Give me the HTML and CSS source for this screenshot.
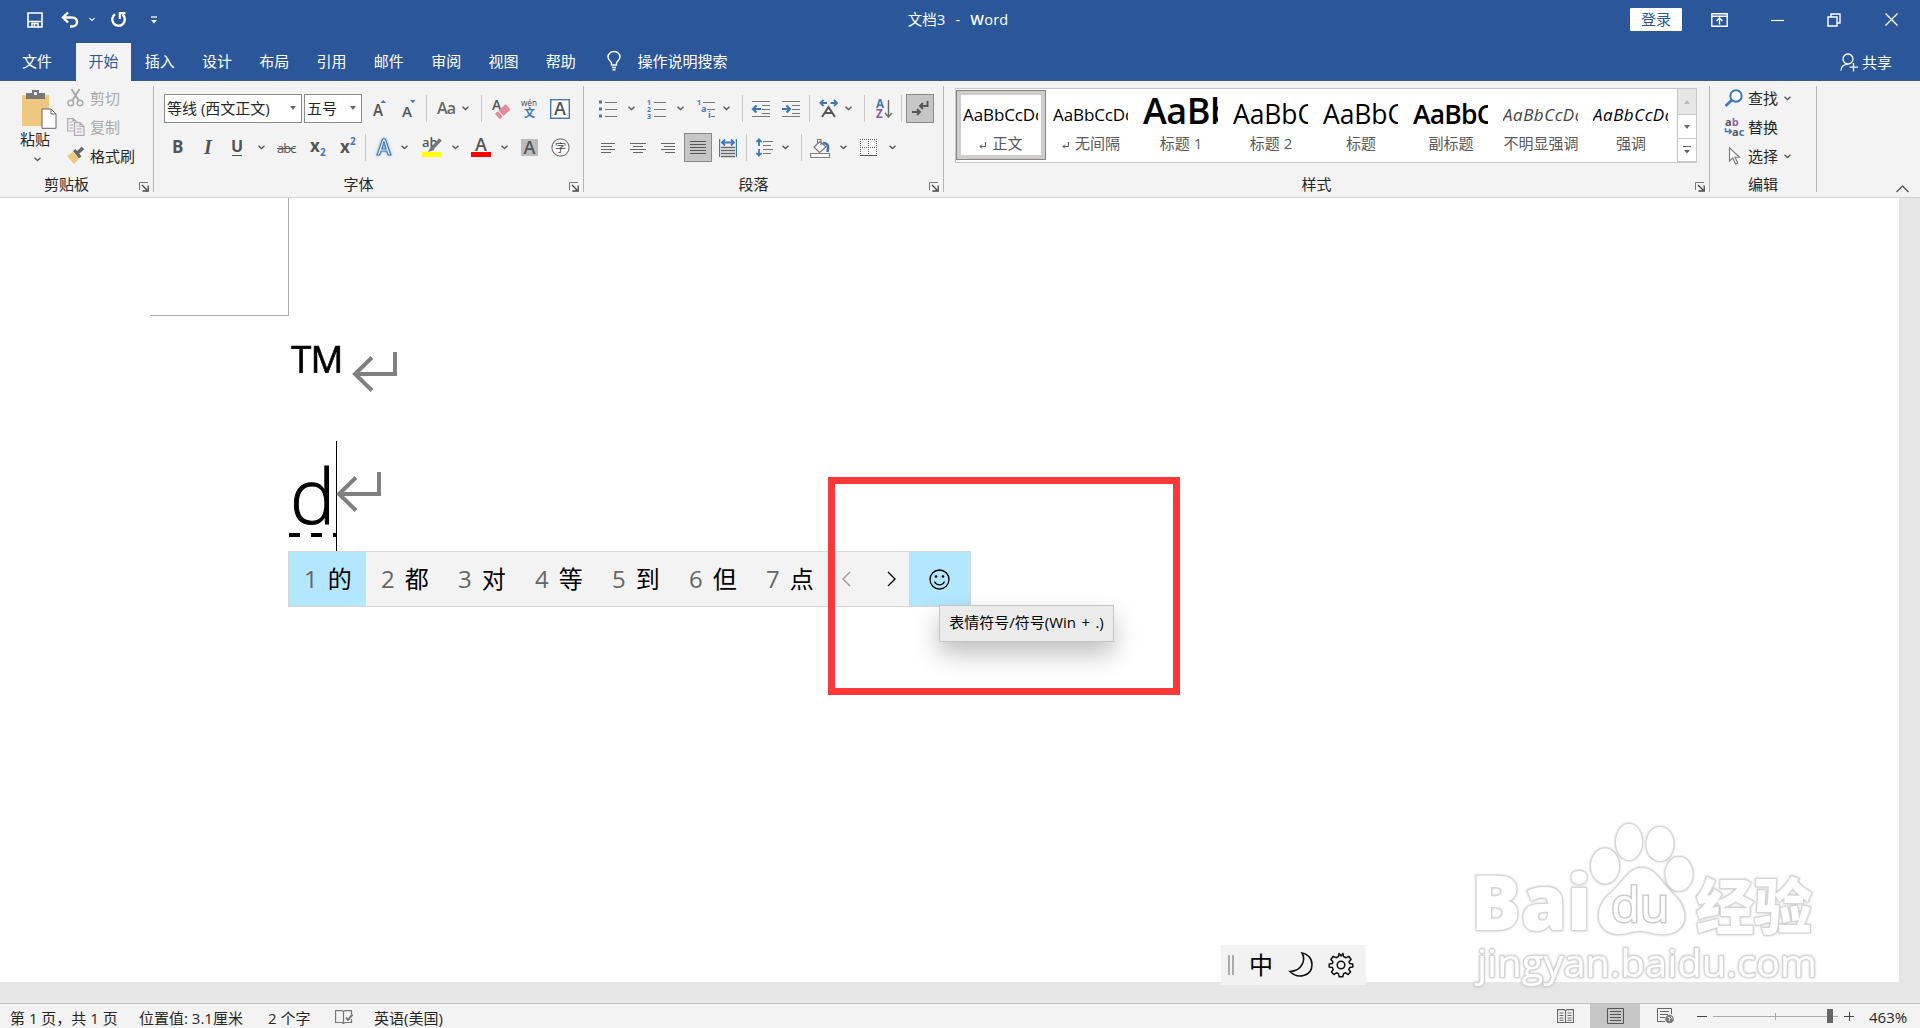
FILE: index.html
```html
<!DOCTYPE html>
<html lang="zh-CN">
	<head>
		<meta charset="UTF-8">
		<title>文档3 - Word</title>
		<link rel="stylesheet" href="styles.css">
	</head>
	<body>
		<svg class="defs">
			<symbol id="caret" viewBox="0 0 7 5"><path d="M.5 .8L3.5 3.6L6.5 .8" fill="none" stroke="currentColor" stroke-width="1.3"/></symbol>
			<symbol id="launcher" viewBox="0 0 10 10"><path d="M.5 8V.5H9" fill="none" stroke="#777"/><path d="M3 3L8 8M9.2 3.5V9H3.5" fill="none" stroke="#444" stroke-width="1.3"/></symbol>
			<symbol id="enter" viewBox="0 0 45 40"><path d="M43 0V22H3M20 5.5L3 22L20 38.5" fill="none" stroke="#808080" stroke-width="4"/></symbol>
		</svg>

		<div class="header">
			<div class="titlebar">
				<div class="quick">
					<svg width="16" height="16" viewBox="0 0 16 16"><path d="M1 1H15V15H1Z" fill="none" stroke="#fff" stroke-width="1.6"/><path d="M1 9.5H15M5 15V11.5H11V15M7.5 12V15" fill="none" stroke="#fff" stroke-width="1.5"/></svg>
					<svg width="18" height="16" viewBox="0 0 18 16"><path d="M2 5.5H11C18 5.5 17.5 14.5 11 14.5H9" fill="none" stroke="#fff" stroke-width="2.4"/><path d="M7 .5L2 5.5L7 10.5" fill="none" stroke="#fff" stroke-width="2.4"/></svg>
					<svg class="white" width="6" height="5"><use href="#caret"/></svg>
					<svg width="17" height="17" viewBox="0 0 17 17"><path d="M5 3.2A6.3 6.3 0 1 0 12.5 3.5" fill="none" stroke="#fff" stroke-width="2.4"/><path d="M9.8 8V2.2H15.5" fill="none" stroke="#fff" stroke-width="2.2"/></svg>
					<svg width="6" height="8" viewBox="0 0 6 8"><path d="M0 1H6" stroke="#fff" stroke-width="1.3"/><path d="M0 4H6L3 7.5Z" fill="#fff"/></svg>
				</div>
				<div class="title">文档3&nbsp; -&nbsp; <b>W</b>ord</div>
				<div class="window">
					<span class="login">登录</span>
					<svg width="17" height="14" viewBox="0 0 17 14"><path d="M.8 .8H16.2V13.2H.8ZM.8 3.2H16.2M8.5 11.5V5.5M5.5 8L8.5 5L11.5 8" fill="none" stroke="#fff" stroke-width="1.4"/></svg>
					<svg width="13" height="14" viewBox="0 0 13 14"><path d="M0 7.5H13" stroke="#fff" stroke-width="1.2"/></svg>
					<svg width="14" height="14" viewBox="0 0 14 14"><path d="M1 4H10V13H1ZM4 4V1H13V10H10" fill="none" stroke="#fff" stroke-width="1.4"/></svg>
					<svg width="13" height="13" viewBox="0 0 13 13"><path d="M.5 .5L12.5 12.5M12.5 .5L.5 12.5" stroke="#fff" stroke-width="1.4"/></svg>
				</div>
			</div>
			<ul class="tabs">
				<li class="file">文件</li>
				<li class="ac">开始</li>
				<li>插入</li>
				<li>设计</li>
				<li>布局</li>
				<li>引用</li>
				<li>邮件</li>
				<li>审阅</li>
				<li>视图</li>
				<li>帮助</li>
				<li class="tell">
					<svg width="14" height="20" viewBox="0 0 14 20"><path d="M4.5 14V12C4.5 10.5 1 9.5 1 6A6 5.500 0 0 1 13 6C13 9.5 9.5 10.5 9.5 12V14ZM5 16.5H9M5.500 18.8H8.500" fill="none" stroke="#fff" stroke-width="1.4"/></svg>
					操作说明搜索
				</li>
				<li class="share">
					<svg width="18" height="18" viewBox="0 0 18 18"><circle cx="8" cy="6" r="5" fill="none" stroke="#fff" stroke-width="1.3"/><path d="M1 17.5C1 13 4 11.3 8 11.3M13.5 10V18.5M9.5 14.2H18" fill="none" stroke="#fff" stroke-width="1.3"/></svg>
					共享
				</li>
			</ul>
		</div>

		<div class="ribbon">
			<div class="group clipboard">
				<div class="tools">
					<div class="paste">
						<svg width="35" height="39" viewBox="0 0 35 39"><path d="M0 5H27V36H0Z" fill="#edc87e"/><path d="M4 3H10V0H17V3H23V9H4Z" fill="#777"/><rect x="12" y="2" width="3" height="3" fill="#f3f3f3"/><path d="M20 19H29L34 24V38.3H20Z" fill="#fff" stroke="#666"/><path d="M29 19V24H34" fill="none" stroke="#666"/></svg>
						<span>粘贴</span>
						<svg width="7" height="5"><use href="#caret"/></svg>
					</div>
					<ul class="clips">
						<li class="off"><svg width="18" height="18" viewBox="0 0 18 18"><path d="M4.5 0L12 12M12.5 0L5 12" stroke="#aaa" stroke-width="2"/><circle cx="3.8" cy="14" r="2.8" fill="none" stroke="#aaa" stroke-width="1.5"/><circle cx="13" cy="14" r="2.8" fill="none" stroke="#aaa" stroke-width="1.5"/></svg>剪切</li>
						<li class="off"><svg width="18" height="18" viewBox="0 0 18 18"><path d="M7 13H.7V.7H6L10 4M6 .7V4M2.5 4H5M2.5 7H6M2.5 10H6" fill="none" stroke="#b0a8b0" stroke-width="1.2"/><path d="M7.5 4.7H13L17 8.5V17.3H7.5ZM13 4.7V8.5H17M9.5 8H11.5M9.5 11H15M9.5 14H15" fill="none" stroke="#b0a8b0" stroke-width="1.2"/></svg>复制</li>
						<li><svg width="18" height="18" viewBox="0 0 18 18"><path d="M0 9L6 5L12 12L7 17Z" fill="#edc87e"/><path d="M6 4L8.5 2L14.5 9.5L12 11.5Z" fill="#666"/><path d="M11 5.5L16 1" stroke="#666" stroke-width="3.5"/></svg>格式刷</li>
					</ul>
				</div>
				<div class="label">剪贴板</div>
				<svg class="launcher"><use href="#launcher"/></svg>
			</div>

			<div class="group font">
				<div class="tools">
					<div class="row row1">
						<div class="combo name">等线 (西文正文)</div>
						<div class="combo size">五号</div>
						<svg width="14" height="20" viewBox="0 0 14 20"><text x="0" y="17" font-size="17" textLength="10" lengthAdjust="spacingAndGlyphs" class="semi">A</text><path d="M7.5 4L10.3 1L13 4Z" fill="#3f78b5"/></svg>
						<svg width="14" height="20" viewBox="0 0 14 20"><text x="0" y="18" font-size="15" textLength="10" lengthAdjust="spacingAndGlyphs" class="semi">A</text><path d="M8 1L10.8 4L13.5 1Z" fill="#3f78b5"/></svg>
						<i class="sep"></i>
						<span class="aa">Aa</span>
						<svg width="7" height="5"><use href="#caret"/></svg>
						<i class="sep"></i>
						<svg width="18" height="20" viewBox="0 0 18 20"><text x="0" y="11" font-size="14" class="semi">A</text><g transform="rotate(-42 10 13)"><rect x="3.5" y="9.5" width="4" height="7.5" rx="1" fill="#e58a9d"/><rect x="8.5" y="9.5" width="9.5" height="7.5" rx="1" fill="#e58a9d"/></g></svg>
						<svg width="17" height="20" viewBox="0 0 17 20"><text x="0" y="7" font-size="9.5" textLength="16" lengthAdjust="spacingAndGlyphs">wén</text><text x="3" y="18" font-size="11" fill="#3f78b5" font-weight="bold">文</text></svg>
						<svg width="20" height="20" viewBox="0 0 20 20"><rect x=".7" y=".7" width="18.6" height="18.6" fill="#fff" stroke="#3f78b5" stroke-width="1.4"/><text x="10" y="16.3" font-size="18" text-anchor="middle" class="semi">A</text></svg>
					</div>
					<div class="row row2">
						<b class="glyph bold">B</b>
						<b class="glyph italic">I</b>
						<b class="glyph under">U</b>
						<svg width="7" height="5"><use href="#caret"/></svg>
						<span class="glyph strike">abc</span>
						<svg width="16" height="20" viewBox="0 0 16 20"><text x="0" y="14" font-size="17" font-weight="bold" class="grey">x</text><text x="10" y="18" font-size="10" fill="#3f78b5" font-weight="bold">2</text></svg>
						<svg width="16" height="20" viewBox="0 0 16 20"><text x="0" y="15" font-size="17" font-weight="bold" class="grey">x</text><text x="10" y="7" font-size="10" fill="#3f78b5" font-weight="bold">2</text></svg>
						<i class="sep"></i>
						<svg width="17" height="21" viewBox="0 0 17 21"><text x="8" y="18" font-size="21" text-anchor="middle" class="effect">A</text></svg>
						<svg width="7" height="5"><use href="#caret"/></svg>
						<svg width="21" height="21" viewBox="0 0 21 21"><text x="0" y="10" font-size="13" class="semi">ab</text><path d="M18.5 2.5L10 11.5" stroke="#777" stroke-width="3.5"/><path d="M9 9.5L12.5 13L6 15Z" fill="#777"/><rect y="15" width="20" height="5" fill="#ff0"/></svg>
						<svg width="7" height="5"><use href="#caret"/></svg>
						<svg width="21" height="21" viewBox="0 0 21 21"><text x="10" y="13.5" font-size="18" text-anchor="middle" class="semi">A</text><rect y="15" width="20" height="5" fill="#f00"/></svg>
						<svg width="7" height="5"><use href="#caret"/></svg>
						<svg width="17" height="19" viewBox="0 0 17 19"><rect width="17" height="17" y="1" fill="#bcbcbc"/><text x="8.5" y="16" font-size="18" text-anchor="middle" class="semi">A</text></svg>
						<svg width="19" height="19" viewBox="0 0 19 19"><circle cx="9.5" cy="9.5" r="8.6" fill="#fff" stroke="#777" stroke-width="1.2"/><text x="9.5" y="13.5" font-size="11.5" text-anchor="middle">字</text></svg>
					</div>
				</div>
				<div class="label">字体</div>
				<svg class="launcher"><use href="#launcher"/></svg>
			</div>

			<div class="group para">
				<div class="tools">
					<div class="row row1">
						<svg width="19" height="18" viewBox="0 0 19 18"><path d="M6 2.5H18M6 9.5H18M6 16.5H18" stroke="#777"/><path d="M0 2H3M0 9H3M0 16H3" stroke="#3f78b5" stroke-width="3"/></svg>
						<svg width="7" height="5"><use href="#caret"/></svg>
						<svg width="19" height="20" viewBox="0 0 19 20"><path d="M7 3.5H19M7 10.5H19M7 17.5H19" stroke="#777"/><g fill="#3f78b5" font-size="7" font-weight="bold"><text y="6">1</text><text y="13">2</text><text y="20">3</text></g></svg>
						<svg width="7" height="5"><use href="#caret"/></svg>
						<svg width="19" height="20" viewBox="0 0 19 20"><path d="M6 3.5H18M10 10.5H18M14 17.5H18" stroke="#777"/><g fill="#3f78b5" font-weight="bold"><text y="6" font-size="7">1</text><text x="4" y="13" font-size="9">a</text><text x="11" y="19" font-size="9">i</text></g></svg>
						<svg width="7" height="5"><use href="#caret"/></svg>
						<i class="sep"></i>
						<svg width="18" height="18" viewBox="0 0 18 18"><path d="M0 1.5H18M10 5.5H18M10 9.5H18M10 13.5H18M0 16.5H18" stroke="#777"/><path d="M9 9H1M4.5 5.5L1 9L4.5 12.5" fill="none" stroke="#3f78b5" stroke-width="2.2"/></svg>
						<svg width="18" height="18" viewBox="0 0 18 18"><path d="M0 1.5H18M10 5.5H18M10 9.5H18M10 13.5H18M0 16.5H18" stroke="#777"/><path d="M0 9H8M4.5 5.5L8 9L4.5 12.5" fill="none" stroke="#3f78b5" stroke-width="2.2"/></svg>
						<i class="sep"></i>
						<svg width="20" height="19" viewBox="0 0 20 19"><path d="M3 18L9.5 8L16 18M6 14H13.5" fill="none" stroke="#555" stroke-width="2"/><path d="M8 4H1.5M4.5 1L1.5 4L4.5 7M11.5 4H18M15 1L18 4L15 7" fill="none" stroke="#3f78b5" stroke-width="1.8"/></svg>
						<svg width="7" height="5"><use href="#caret"/></svg>
						<i class="sep"></i>
						<svg width="18" height="20" viewBox="0 0 18 20"><text x="1" y="9" font-size="11.5" font-weight="bold" fill="#3f78b5">A</text><text x="1" y="19" font-size="11.5" font-weight="bold" fill="#8c5aa8">Z</text><path d="M13.5 1V18M10 14L13.5 18L17 14" fill="none" stroke="#666" stroke-width="1.4"/></svg>
						<i class="sep"></i>
						<div class="pressed"><svg width="17" height="15" viewBox="0 0 17 15"><path d="M15.5 0V5H8.5M11 2L8 5L11 8" fill="none" stroke="#555" stroke-width="1.9"/><path d="M0 11H7M5 8L8 11L5 14" fill="none" stroke="#555" stroke-width="1.9"/></svg></div>
					</div>
					<div class="row row2">
						<svg width="14" height="12" viewBox="0 0 14 12"><path d="M0 1.5H14M0 4.5H11M0 7.5H14M0 10.5H10" stroke="#666"/></svg>
						<svg width="16" height="12" viewBox="0 0 16 12"><path d="M0 1.5H16M3 4.5H13M0 7.5H16M3 10.5H13" stroke="#666"/></svg>
						<svg width="14" height="12" viewBox="0 0 14 12"><path d="M0 1.5H14M3 4.5H14M0 7.5H14M4 10.5H14" stroke="#666"/></svg>
						<div class="pressed"><svg width="16" height="14" viewBox="0 0 16 14"><path d="M0 .5H16M0 3.5H16M0 6.5H16M0 9.5H16M0 12.5H16" stroke="#555"/></svg></div>
						<svg width="18" height="18" viewBox="0 0 18 18"><path d="M.6 0V18M17.4 0V18" stroke="#3f78b5" stroke-width="1.2"/><path d="M2 8.5H16M2 11.5H16M2 14.5H16M2 17.5H16" stroke="#666" stroke-width="1.4"/><path d="M3 3.5H15M6 .5L3 3.5L6 6.5M12 .5L15 3.5L12 6.5" fill="none" stroke="#3f78b5" stroke-width="1.8"/></svg>
						<i class="sep"></i>
						<svg width="17" height="19" viewBox="0 0 17 19"><path d="M7 3.5H17M7 7.5H15M7 11.5H17M7 15.5H15" stroke="#777"/><path d="M3 1.5V8M3 11V17.5M.5 4L3 1.3L5.5 4M.5 15L3 17.7L5.5 15" fill="none" stroke="#3f78b5" stroke-width="1.8"/></svg>
						<svg width="7" height="5"><use href="#caret"/></svg>
						<i class="sep"></i>
						<svg width="21" height="20" viewBox="0 0 21 20"><path d="M4 9L10 3.5L16 9L9.5 14.5ZM7.5 6V1.5H11V7" fill="#fff" stroke="#777" stroke-width="1.2"/><path d="M13 5C18 5 19 8 17.5 14" fill="none" stroke="#3f78b5" stroke-width="2.5"/><rect x=".6" y="15.6" width="19" height="3.8" fill="#fff" stroke="#777"/></svg>
						<svg width="7" height="5"><use href="#caret"/></svg>
						<svg width="18" height="18" viewBox="0 0 18 18"><path d="M0 0H17V17H0Z" fill="#fff"/><path d="M0 .5H17M.5 0V17M16.5 0V17M8.5 0V17M0 8.5H17" stroke="#666" stroke-dasharray="1 1"/><path d="M0 16.5H17" stroke="#555"/></svg>
						<svg width="7" height="5"><use href="#caret"/></svg>
					</div>
				</div>
				<div class="label">段落</div>
				<svg class="launcher"><use href="#launcher"/></svg>
			</div>

			<div class="group styles">
				<div class="tools">
					<ul class="gallery">
						<li class="ac"><p>AaBbCcDc</p><span><svg width="7" height="7" viewBox="0 0 7 7"><path d="M6.500 0V4.500H1M3 2.500L1 4.500L3 6.500" fill="none" stroke="#555"/></svg>正文</span></li>
						<li><p>AaBbCcDc</p><span><svg width="7" height="7" viewBox="0 0 7 7"><path d="M6.500 0V4.500H1M3 2.500L1 4.500L3 6.500" fill="none" stroke="#555"/></svg>无间隔</span></li>
						<li class="h1"><p>AaBb</p><span>标题 1</span></li>
						<li class="h2"><p>AaBbC</p><span>标题 2</span></li>
						<li class="h2"><p>AaBbC</p><span>标题</span></li>
						<li class="h2 strong"><p>AaBbC</p><span>副标题</span></li>
						<li class="em light"><p>AaBbCcDc</p><span>不明显强调</span></li>
						<li class="em"><p>AaBbCcDc</p><span>强调</span></li>
					</ul>
					<div class="scroll">
						<div class="dim"><svg width="6" height="4"><path d="M0 4L3 0L6 4Z" fill="#bbb"/></svg></div>
						<div><svg width="6" height="4"><path d="M0 0L3 4L6 0Z" fill="#666"/></svg></div>
						<div><svg width="8" height="8"><path d="M0 .5H8" stroke="#666"/><path d="M1 4H7L4 7.5Z" fill="#666"/></svg></div>
					</div>
				</div>
				<div class="label">样式</div>
				<svg class="launcher"><use href="#launcher"/></svg>
			</div>

			<div class="group edit">
				<ul class="tools">
					<li><svg width="20" height="18" viewBox="0 0 20 18"><circle cx="12" cy="7" r="5.7" fill="#fff" stroke="#3f78b5" stroke-width="2"/><path d="M8 11L1.5 17" stroke="#3f78b5" stroke-width="2.6"/></svg>查找<svg class="far" width="7" height="5"><use href="#caret"/></svg></li>
					<li><svg width="20" height="19" viewBox="0 0 20 19"><g font-size="11" font-weight="bold"><text x="1" y="8" class="grey">a<tspan fill="#9b5fb5">b</tspan></text><text x="8" y="18" class="grey">a<tspan fill="#3f78b5">c</tspan></text></g><path d="M1.5 10V13.5H7M5 11L7.5 13.5L5 16" fill="none" stroke="#3f78b5" stroke-width="1.4"/></svg>替换</li>
					<li><svg width="20" height="18" viewBox="0 0 20 18"><path d="M5.5 .8V14L8.8 11L11.5 17L13.8 16L11 10.3H15.5Z" fill="#fff" stroke="#777" stroke-width="1.1"/></svg>选择<svg width="7" height="5"><use href="#caret"/></svg></li>
				</ul>
				<div class="label">编辑</div>
			</div>
			<svg class="collapse" width="13" height="8" viewBox="0 0 13 8"><path d="M.5 7L6.5 1L12.5 7" fill="none" stroke="#555" stroke-width="1.4"/></svg>
		</div>

		<div class="workspace">
			<div class="page">
				<div class="corner"></div>
				<p class="line tm"><span>™</span><svg width="45" height="40"><use href="#enter"/></svg></p>
				<p class="line typed"><span>d</span><i class="cursor"></i><svg width="45" height="40"><use href="#enter"/></svg></p>
			</div>

			<div class="ime">
				<ol>
					<li class="ac"><i>1</i>的</li>
					<li><i>2</i>都</li>
					<li><i>3</i>对</li>
					<li><i>4</i>等</li>
					<li><i>5</i>到</li>
					<li><i>6</i>但</li>
					<li><i>7</i>点</li>
				</ol>
				<div class="pager">
					<svg width="9" height="16" viewBox="0 0 9 16"><path d="M8 1L1 8L8 15" fill="none" stroke="#999" stroke-width="1.3"/></svg>
					<svg width="9" height="16" viewBox="0 0 9 16"><path d="M1 1L8 8L1 15" fill="none" stroke="#000" stroke-width="1.4"/></svg>
				</div>
				<div class="emoji">
					<svg width="21" height="21" viewBox="0 0 21 21"><circle cx="10.5" cy="10.5" r="9.5" fill="none" stroke="#000" stroke-width="1.3"/><circle cx="7" cy="7.5" r="1.3"/><circle cx="14" cy="7.5" r="1.3"/><path d="M5.5 12.5C7.5 17 13.5 17 15.5 12.5" fill="none" stroke="#000" stroke-width="1.3"/></svg>
				</div>
			</div>
			<div class="mark"></div>
			<div class="tip">表情符号/符号(Win + .)</div>

			<div class="imebar">
				<i class="grip"></i>
				<span>中</span>
				<svg width="24" height="26" viewBox="0 0 24 26"><path d="M13 1C17 8 13 19 1 19.5C8 27 23 25 23 12.5C23 6 18 1.5 13 1Z" fill="none" stroke="#111" stroke-width="1.6"/></svg>
				<svg width="26" height="26" viewBox="0 0 26 26"><circle cx="13" cy="13" r="3.8" fill="none" stroke="#111" stroke-width="1.5"/><path d="M11 1.5L10.5 4.5L8 5.7L5.2 4.3L2.9 7.5L4.9 9.7L4.3 11.5L1.2 12V15L4.3 15.5L5.2 17.5L3.5 20L5.8 22.5L8.5 20.8L10.4 21.6L11.2 24.7H14.8L15.6 21.6L17.5 20.8L20.2 22.5L22.5 20L20.8 17.5L21.7 15.5L24.8 15V12L21.7 11.5L21 9.7L23.1 7.5L20.8 4.3L18 5.7L15.5 4.5L15 1.5L13 4Z" fill="none" stroke="#111" stroke-width="1.5" stroke-linejoin="round"/></svg>
			</div>

			<svg class="watermark" width="360" height="180" viewBox="0 0 360 180">
				<g class="wm">
					<text x="7" y="108" font-size="77" font-weight="800" textLength="120" lengthAdjust="spacingAndGlyphs">Bai</text>
					<ellipse cx="141" cy="44" rx="14" ry="17.5"/>
					<ellipse cx="165" cy="20" rx="13" ry="18"/>
					<ellipse cx="196" cy="22" rx="13.5" ry="17"/>
					<ellipse cx="215" cy="52" rx="13.5" ry="17"/>
					<path d="M178 46C164 46 158 62 147 71C129 85 131 111 154 112C165 112 169 108 178 109C188 110 192 113 202 112C224 110 226 88 209 72C197 60 191 46 178 46Z"/>
					<text class="du" x="147" y="100" font-size="47" textLength="58" lengthAdjust="spacingAndGlyphs">du</text>
					<text x="232" y="107" font-size="60" font-weight="900" textLength="116" lengthAdjust="spacingAndGlyphs">经验</text>
					<text x="13" y="155" font-size="38" textLength="340" lengthAdjust="spacingAndGlyphs">jingyan.baidu.com</text>
				</g>
			</svg>
		</div>

		<div class="status">
			<span class="pages">第 1 页，共 1 页</span>
			<span class="pos">位置值: 3.1厘米</span>
			<span class="words">2 个字</span>
			<svg class="proof" width="18" height="15" viewBox="0 0 18 15"><path d="M8.5 13.5L7 12.5H.6V.6H7L8.5 1.6L10 .6H16.5V4M8.5 1.6V14M8.5 13.5L10 12.5H16.5V9" fill="none" stroke="#777" stroke-width="1.2"/><path d="M11 7.5L13 10L17.5 4.5" fill="none" stroke="#777" stroke-width="2"/></svg>
			<span>英语(美国)</span>
			<div class="views">
				<div><svg width="17" height="15" viewBox="0 0 17 15"><path d="M8.5 13.5H.6V.6H7L8.5 1.6L10 .6H16.4V13.5H8.5V1.6M2.5 4H6.5M2.5 6.5H6.5M2.5 9H6.5M2.5 11.3H6.5M10.5 4H14.5M10.5 6.5H14.5M10.5 9H14.5M10.5 11.3H14.5" fill="none" stroke="#666" stroke-width="1.1"/></svg></div>
				<div class="ac"><svg width="17" height="16" viewBox="0 0 17 16"><path d="M.5 .5H16.5V15.5H.5ZM3 3.5H14M3 6.5H14M3 9.5H14M3 12.5H14" fill="none" stroke="#555"/></svg></div>
				<div><svg width="17" height="16" viewBox="0 0 17 16"><path d="M8 13.5H.5V.5H14.5V6M3 3.5H12M3 6.5H11M3 9.5H8" fill="none" stroke="#666"/><circle cx="12.5" cy="11" r="4.3" fill="#777"/><path d="M10.5 9L13 10L12 13M14 8.5L15.5 11" fill="none" stroke="#f3f3f3"/></svg></div>
			</div>
			<div class="zoom">
				<i class="minus"></i>
				<div class="slider"><i class="tick"></i><i class="thumb"></i></div>
				<i class="plus"></i>
				<span>463%</span>
			</div>
		</div>
	</body>
</html>
```

FILE: styles.css
```css
*{
	margin: 0;
	padding: 0;
	box-sizing: border-box;
}
body{
	width: 1920px;
	height: 1028px;
	overflow: hidden;
	display: flex;
	flex-direction: column;
	font: 15px/20px "Open Sans", "Noto Sans CJK SC", sans-serif;
	color: #262626;
	background: #e6e6e6;
}
li{
	list-style: none;
}
i{
	font-style: normal;
}
svg{
	display: block;
	flex: none;
	overflow: visible;
}
svg text{
	fill: #444;
}
svg text[fill], svg g[fill] text{
	fill: revert-layer;
}
.defs{
	width: 0;
	height: 0;
	position: absolute;
}

/* 标题栏 */
.header{
	height: 81px;
	background: #2b579a;
	color: #fff;
}
.titlebar{
	height: 43px;
	padding-bottom: 4px;
	display: grid;
	grid-template-columns: 800px 316px 1fr;
	align-items: center;
}
.quick{
	display: grid;
	grid-template-columns: 34px 28px 21px 41px 6px;
	align-items: center;
	padding-left: 27px;
}
.white{
	color: #fff;
}
.title{
	text-align: center;
	font-size: 14.5px;
	word-spacing: 1px;
	letter-spacing: .2px;
}
.title b{
	font-weight: 600;
}
.window{
	display: grid;
	grid-template-columns: 81px 60px 56px 58px 13px;
	align-items: center;
	padding-left: 514px;
}
.login{
	width: 52px;
	height: 23px;
	line-height: 23px;
	text-align: center;
	background: #fff;
	color: #2b579a;
	border-radius: 1px;
}
.tabs{
	height: 38px;
	display: flex;
	line-height: 36px;
}
.tabs li{
	width: 57.3px;
	text-align: center;
}
.tabs .file{
	width: 75px;
	padding-right: 1px;
}
.tabs .ac{
	width: 55px;
	margin-left: 1px;
	background: #f3f3f3;
	color: #2b579a;
}
.tabs .tell{
	width: 130px;
	margin-left: 18px;
	height: 36px;
	display: flex;
	align-items: center;
	gap: 16px;
	white-space: nowrap;
}
.tabs .share{
	width: 80px;
	margin-left: auto;
	height: 37px;
	display: flex;
	align-items: center;
	gap: 4px;
}

/* 功能区 */
.ribbon{
	height: 117px;
	display: flex;
	background: #f3f3f3;
	border-bottom: 1px solid #d2d2d2;
	padding-top: 5px;
	position: relative;
	color: #262626;
}
.group{
	height: 106px;
	border-right: 1px solid #b5b5b5;
	position: relative;
}
.group .tools{
	height: 89px;
}
.label{
	text-align: center;
	line-height: 19px;
}
.launcher{
	position: absolute;
	right: 4px;
	bottom: 0;
	width: 10px;
	height: 10px;
}
.clipboard{
	width: 154px;
}
.clipboard .tools{
	display: flex;
	padding-left: 20px;
}
.clipboard .label{
	padding-right: 20px;
}
.paste{
	width: 47px;
	padding: 4px 0 0 2px;
}
.paste span{
	display: block;
	margin: 0 0 8px -2px;
}
.paste svg + span + svg{
	margin-left: 12px;
	color: #555;
}
.clips li{
	height: 29px;
	line-height: 25px;
	display: flex;
	align-items: center;
	gap: 5px;
	padding-bottom: 5px;
}
.clips .off{
	color: #a9a9a9;
}
.font{
	width: 430px;
	padding-left: 10px;
}
.font .label{
	padding-right: 30px;
}
.group .row{
	display: grid;
	height: 29px;
	align-items: center;
	color: #555;
}
.row1{
	margin-top: 8px;
}
.row2{
	margin-top: 10px;
}
.font .tools, .para .tools{
	display: flow-root;
}
.font .row1{
	grid-template-columns: 140px 69px 29px 24px 11px 25px 19px 11px 29px 29px 20px;
}
.font .row2{
	grid-template-columns: 31px 28px 26px 19px 33px 30px 25px 11px 25px 21px 30px 19px 30px 20px 30px 19px;
	padding-left: 9px;
}
.combo{
	height: 29px;
	border: 1px solid #8c8c8c;
	background: #fff;
	color: #262626;
	line-height: 24px;
	padding: 0 0 2px 2px;
	white-space: nowrap;
	display: flex;
	align-items: center;
	justify-content: space-between;
}
.combo:after{
	content: "";
	border: 3.5px solid transparent;
	border-top: 4px solid #666;
	border-bottom: 0;
	margin-right: 5px;
}
.name{
	width: 138px;
}
.size{
	width: 58px;
}
.sep{
	width: 1px;
	height: 27px;
	background: #c9c9c9;
}
.aa{
	font-size: 16px;
	letter-spacing: -.8px;
	line-height: 18px;
	padding-bottom: 2px;
	font-weight: 600;
	color: #666;
}
.semi{
	font-weight: 600;
	fill: #555;
}
.grey{
	fill: #555;
}
.glyph{
	font-size: 17px;
	color: #555;
}
.bold{
	margin: -2px 0 0 -1px;
}
.italic{
	font-family: "Liberation Serif", serif;
	font-style: italic;
	font-size: 20px;
	margin-top: -2px;
}
.under{
	font-size: 16px;
	border-bottom: 1px solid #555;
	width: 10px;
	height: 17px;
	line-height: 14px;
	display: flex;
	justify-content: center;
}
.strike{
	font-size: 13px;
	text-decoration: line-through;
	letter-spacing: -1px;
}
svg .effect{
	fill: #fff;
	stroke: #3f78b5;
	stroke-width: 1.2;
	font-weight: 600;
	filter: drop-shadow(0 0 1.5px #7fb2e8);
}
.para{
	width: 360px;
}
.para .row1{
	grid-template-columns: 29px 19px 30px 20px 26px 19px 10px 30px 27px 10px 26px 19px 11px 26px 5px 28px;
	padding-left: 15px;
}
.para .row2{
	grid-template-columns: 29px 31px 23px 35px 27px 10px 26px 19px 9px 30px 20px 29px 7px;
	padding-left: 17px;
}
.para .label{
	padding-right: 20px;
}
.pressed{
	width: 28px;
	height: 29px;
	border: 1px solid #8a8a8a;
	background: #c6c6c6;
	display: flex;
	align-items: center;
	justify-content: center;
}
.styles{
	width: 766px;
}
.styles .label{
	padding-right: 20px;
}
.styles .tools{
	display: flex;
	padding: 2px 0 12px 11px;
}
.gallery{
	width: 723px;
	height: 75px;
	border: 1px solid #c8c8c8;
	background: #fff;
	display: flex;
}
.gallery li{
	width: 90px;
	height: 70px;
	margin-top: 1px;
	padding: 5px 7px 0;
	text-align: center;
	color: #595959;
	font-size: 15px;
}
.gallery .ac{
	outline: 1px solid #858585;
	outline-offset: -1px;
	box-shadow: inset 0 0 0 5px #cfcdcb;
}
.gallery p{
	width: 75px;
	height: 38px;
	line-height: 39px;
	overflow: hidden;
	text-align: left;
	color: #000;
	font-size: 17px;
	letter-spacing: -.1px;
	white-space: nowrap;
}
.gallery span{
	display: flex;
	justify-content: center;
	align-items: center;
	line-height: 21px;
	white-space: nowrap;
}
.gallery span svg{
	margin: 4px 6px 0 0;
}
.gallery .h1 p{
	font-size: 36px;
	font-weight: 600;
	line-height: 32px;
	letter-spacing: -.5px;
}
.gallery .h2 p{
	font-size: 26.500px;
	line-height: 38px;
}
.gallery .strong p{
	font-weight: 600;
	letter-spacing: -.8px;
}
.gallery .em p{
	font-style: italic;
	letter-spacing: .5px;
}
.gallery .light p{
	color: #444;
}
.scroll{
	width: 19px;
	height: 75px;
	border: 1px solid #c8c8c8;
	border-left: 0;
	display: grid;
	grid-template-rows: 26px 24px 23px;
	background: #fff;
}
.scroll div{
	display: flex;
	align-items: center;
	justify-content: center;
	border-bottom: 1px solid #c8c8c8;
}
.scroll .dim{
	background: #e6e6e6;
}
.edit{
	width: 107px;
}
.edit li{
	height: 29px;
	display: flex;
	align-items: center;
	gap: 4px;
	padding: 0 0 5px 14px;
}
.edit li svg:last-child:not(:first-child){
	margin-left: 2px;
	color: #555;
}
.edit li .far.far{
	margin-left: 11px;
}
.collapse{
	position: absolute;
	right: 11px;
	bottom: 4px;
}

/* 文档 */
.workspace{
	height: 805px;
	position: relative;
}
.page{
	width: 1899px;
	height: 784px;
	background: #fff;
	overflow: hidden;
}
.corner{
	width: 139px;
	height: 118px;
	margin-left: 150px;
	border: 1px solid #ababab;
	border-width: 0 1px 1px 0;
}
.line{
	display: flex;
	margin-left: 289px;
	color: #000;
}
.tm{
	height: 125px;
	padding-top: 36px;
}
.tm span{
	width: 63px;
	padding-left: 2px;
	margin-top: -11px;
	font-family: "Open Sans", "Noto Sans", sans-serif;
	font-weight: 300;
	font-size: 76px;
	line-height: 60px;
	-webkit-text-stroke: .6px #000;
}
.typed{
	height: 110px;
}
.typed span{
	width: 47px;
	height: 97px;
	padding-left: 1px;
	font-size: 76px;
	font-weight: 300;
	line-height: 108px;
	-webkit-text-stroke: 1px #000;
	background: repeating-linear-gradient(90deg, #000 0 11px, transparent 11px 22px) 0 92px / 100% 4px no-repeat;
}
.typed svg{
	margin-top: 31px;
	margin-left: -1px;
}
.cursor{
	width: 1px;
	height: 110px;
	background: #000;
}
.ime{
	position: absolute;
	left: 288px;
	top: 353px;
	width: 683px;
	height: 56px;
	display: flex;
	background: #f3f3f3;
	border: 1px solid #d6d6d6;
	color: #000;
	font-size: 24px;
	line-height: 54px;
}
.ime ol{
	display: flex;
}
.ime li{
	width: 77px;
	padding-left: 15px;
	display: flex;
	gap: 10px;
}
.ime li i{
	color: #666;
}
.ime .ac, .emoji{
	background: #b3e6ff;
}
.pager{
	width: 81px;
	padding: 0 13px 0 14px;
	display: flex;
	align-items: center;
	justify-content: space-between;
}
.emoji{
	flex: 1;
	border-left: 1px solid #d6d6d6;
	display: flex;
	align-items: center;
	justify-content: center;
	padding-right: 1px;
}
.mark{
	position: absolute;
	left: 828px;
	top: 279px;
	width: 352px;
	height: 218px;
	border: 7px solid #fb3737;
}
.tip{
	position: absolute;
	left: 939px;
	top: 407px;
	width: 175px;
	height: 37px;
	border: 1px solid #c4c4c4;
	background: #ebebeb;
	color: #000;
	line-height: 33px;
	text-align: center;
	font-size: 15px;
	white-space: nowrap;
	word-spacing: 1.500px;
	box-shadow: 0 12px 24px rgba(0,0,0,.25);
}
.imebar{
	position: absolute;
	left: 1221px;
	top: 747px;
	width: 145px;
	height: 40px;
	background: #f2f2f2;
	display: grid;
	grid-template-columns: 21px 40px 39px 26px;
	align-items: center;
	padding-left: 7px;
	font-size: 24px;
	color: #000;
}
.grip{
	width: 6px;
	height: 20px;
	border: 1px solid #aaa;
	border-width: 0 2px;
}
.watermark{
	position: absolute;
	left: 1464px;
	top: 624px;
}
.wm{
	filter: drop-shadow(0 0 1px #bbb);
}
.wm *, svg .wm text{
	fill: #fff;
	stroke: #d6d6d6;
	stroke-width: 2px;
	paint-order: stroke;
}
svg .wm .du{
	stroke: #ccc;
	stroke-width: 3px;
}

/* 状态栏 */
.status{
	height: 25px;
	border-top: 1px solid #c6c6c6;
	background: #f3f3f3;
	display: flex;
	align-items: center;
	padding-left: 10px;
	white-space: nowrap;
	font-size: 15px;
	padding-top: 3px;
}
.pages{
	width: 129px;
}
.pos{
	width: 129px;
}
.words{
	width: 67px;
}
.proof{
	margin-right: 21px;
}
.views{
	margin: -3px 0 0 auto;
	display: flex;
	height: 24px;
}
.views div{
	width: 50px;
	display: flex;
	align-items: center;
	justify-content: center;
}
.views .ac{
	background: #c6c6c6;
}
.zoom{
	width: 230px;
	margin-top: -3px;
	display: flex;
	align-items: center;
	padding-left: 7px;
}
.minus, .plus{
	width: 10px;
	height: 1px;
	background: #444;
}
.plus{
	height: 9px;
	background: linear-gradient(#444,#444) 50% 50% / 10px 1px no-repeat, linear-gradient(#444,#444) 50% 50% / 1px 9px no-repeat;
}
.slider{
	width: 125px;
	height: 14px;
	margin: 0 6px;
	position: relative;
	background: linear-gradient(#aaa,#aaa) 0 50% / 100% 1px no-repeat;
}
.tick{
	position: absolute;
	left: 62px;
	top: 4px;
	width: 1px;
	height: 7px;
	background: #aaa;
}
.thumb{
	position: absolute;
	left: 114px;
	width: 6px;
	height: 14px;
	background: #666;
}
.zoom span{
	margin: 2px 0 0 15px;
}
```
